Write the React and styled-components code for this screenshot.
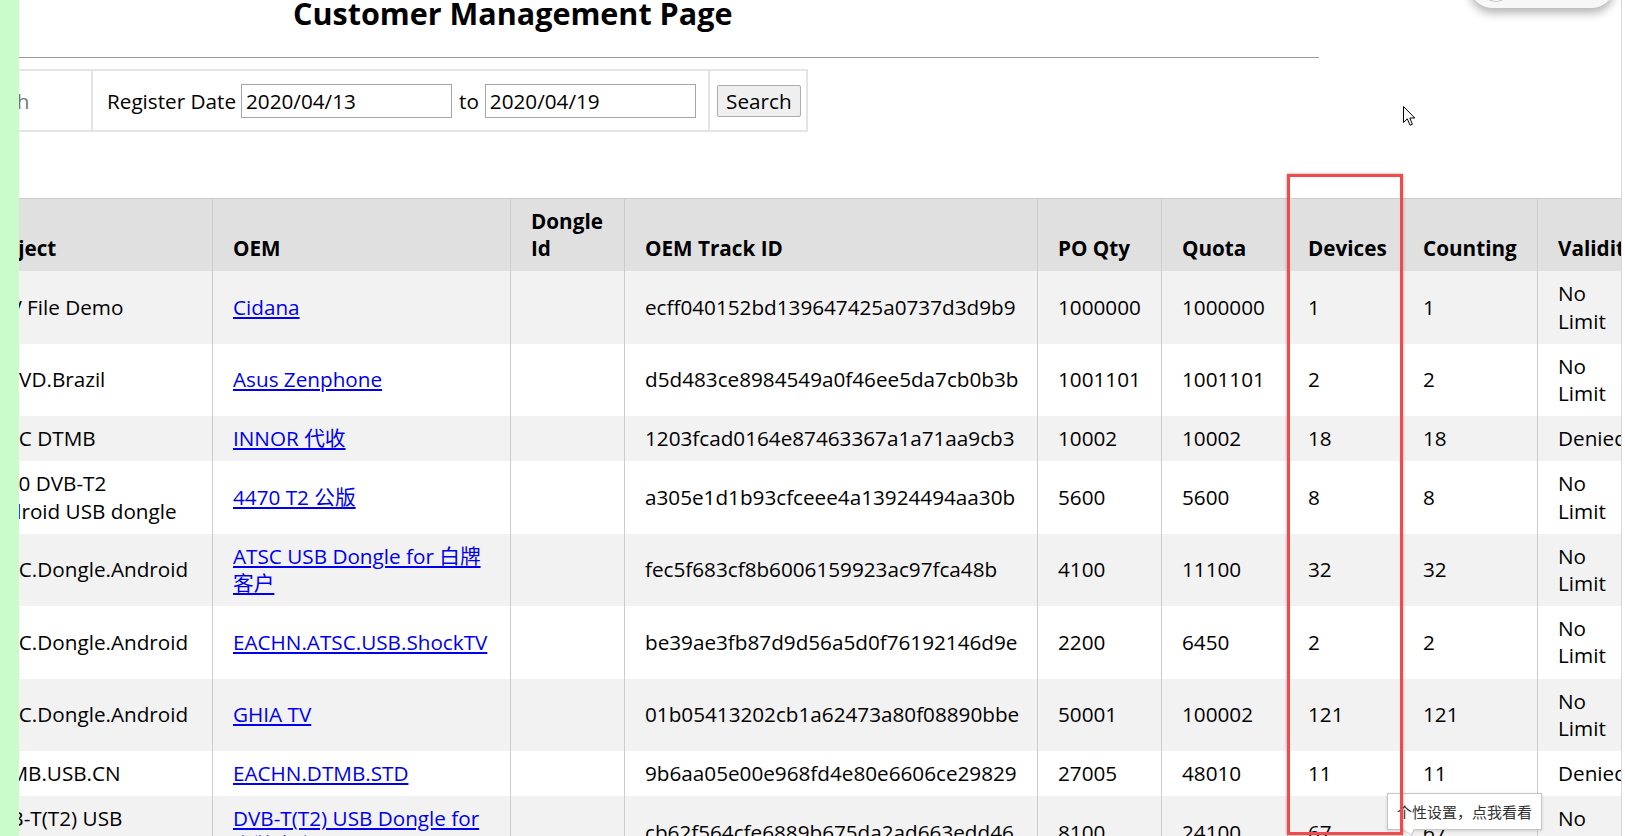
import styled, { createGlobalStyle } from "styled-components";

const GlobalStyle = createGlobalStyle`
  html, body {
    margin: 0;
    padding: 0;
    background: #fff;
  }
  body {
    font-family: "Open Sans", "Noto Sans CJK SC", sans-serif;
    color: #000;
    overflow: hidden;
  }
`;

const Viewport = styled.div`
  position: relative;
  width: 100vw;
  height: 100vh;
  overflow: hidden;
`;

// the page is scrolled a little to the right and down
const Page = styled.div`
  margin: -8px 0 0 -49px;
  width: max-content;
`;

const Title = styled.h1`
  margin: 0;
  padding-left: 342px;
  font-size: 30.5px;
  line-height: 42px;
  font-weight: 700;
`;

const Rule = styled.hr`
  width: 1368px;
  height: 0;
  margin: 23px 0 0;
  border: 0;
  border-top: 1px solid #9b9b9b;
`;

const SearchBar = styled.div`
  display: flex;
  width: max-content;
  height: 63px;
  box-sizing: border-box;
  margin-top: 11px;
  border: 2px solid #e4e4e4;
`;

const SearchCell = styled.div`
  display: flex;
  align-items: center;
  padding: 0 ${(p) => p.$right}px 0 ${(p) => p.$left}px;
  font-size: 20.7px;

  & + & {
    border-left: 2px solid #e4e4e4;
  }
`;

const Label = styled.span`
  margin-right: ${(p) => p.$gap}px;
`;

const Keyword = styled.input`
  width: 112px;
  height: 34px;
  box-sizing: border-box;
  padding: 0 2px;
  border: 0;
  outline: none;
  font: inherit;
  font-size: 20.7px;
  background: transparent;

  &::placeholder {
    color: #757575;
  }
`;

const DateInput = styled.input`
  width: 211px;
  height: 34px;
  box-sizing: border-box;
  margin-right: ${(p) => p.$gap || 0}px;
  padding: 0 4px;
  border: 1px solid #a5a5a5;
  font-family: "Open Sans", sans-serif;
  font-size: 20.7px;
  color: #000;
  background: #fff;
`;

const SearchButton = styled.button`
  width: 84px;
  height: 32px;
  padding: 0;
  border: 1px solid #adadad;
  border-radius: 2px;
  background: #efefef;
  font-family: "Open Sans", sans-serif;
  font-size: 20.7px;
  color: #000;
`;

const Grid = styled.table`
  margin: 66px 0 0 11px;
  width: 1690px;
  border-collapse: collapse;
  table-layout: fixed;
  border-top: 1px solid #ccc;
  font-size: 20.7px;
  line-height: 27.2px;
`;

const Col = styled.col`
  width: ${(p) => p.$w}px;
`;

const Head = styled.th`
  padding: 9px 20px;
  border-left: 1px solid #ccc;
  background: #e0e0e0;
  text-align: left;
  vertical-align: bottom;
  font-weight: 700;

  &:first-child {
    padding-right: 32px;
  }
`;

const Row = styled.tr`
  &:nth-child(odd) {
    background: #f2f2f2;
  }
`;

const Cell = styled.td`
  padding: 9px 20px;
  border-left: 1px solid #ccc;
  vertical-align: middle;

  &:first-child {
    padding-right: 32px;
  }
`;

const OemLink = styled.a`
  color: #0000ee;
  text-decoration: underline;
`;

const GreenStrip = styled.div`
  position: absolute;
  left: 0;
  top: 0;
  width: 19px;
  height: 100%;
  background: #c9fcca;
`;

const RightEdge = styled.div`
  position: absolute;
  right: 0;
  top: 0;
  width: 3px;
  height: 100%;
  background: #fff;
  border-left: 1px solid #d6d6d6;
`;

const FloatBall = styled.div`
  position: absolute;
  left: 1470px;
  top: -36px;
  width: 144px;
  height: 44px;
  border-radius: 22px;
  background: #f7f7f7;
  box-shadow: 0 5px 10px rgba(0, 0, 0, 0.3);

  &::before {
    content: "";
    position: absolute;
    left: 10px;
    top: 6px;
    width: 30px;
    height: 30px;
    border-radius: 50%;
    border: 1px solid #c4c4c4;
    background: #fff;
  }
`;

const RedFrame = styled.div`
  position: absolute;
  left: 1287px;
  top: 174px;
  width: 116px;
  height: 661px;
  box-sizing: border-box;
  border: 3px solid #f24a4a;
  box-shadow: 0 0 3px rgba(0, 0, 0, 0.35);
  z-index: 3;
`;

const Tip = styled.div`
  position: absolute;
  left: 1387px;
  top: 793px;
  width: 155px;
  height: 37px;
  box-sizing: border-box;
  padding-left: 9px;
  display: flex;
  align-items: center;
  border: 1px solid #c6c6c6;
  background: #fff;
  box-shadow: 0 1px 3px rgba(0, 0, 0, 0.15);
  font-family: "Noto Sans CJK SC", sans-serif;
  font-size: 15px;
  color: #333;
  z-index: 2;

  &::after {
    content: "";
    position: absolute;
    left: 16px;
    bottom: -5px;
    width: 8px;
    height: 8px;
    background: #fff;
    border-right: 1px solid #c6c6c6;
    border-bottom: 1px solid #c6c6c6;
    transform: skewX(30deg) rotate(45deg);
  }
`;

const Cursor = styled.svg`
  position: absolute;
  left: 1403px;
  top: 106px;
  z-index: 4;
`;

const columns = [
  { key: "project", label: "Project", w: 250 },
  { key: "oem", label: "OEM", w: 298 },
  { key: "dongle", label: "Dongle Id", w: 114 },
  { key: "track", label: "OEM Track ID", w: 413 },
  { key: "po", label: "PO Qty", w: 124 },
  { key: "quota", label: "Quota", w: 126 },
  { key: "devices", label: "Devices", w: 115 },
  { key: "counting", label: "Counting", w: 135 },
  { key: "validity", label: "Validity", w: 115 },
];

const rows = [
  { project: "DTV File Demo", oem: "Cidana", track: "ecff040152bd139647425a0737d3d9b9", po: "1000000", quota: "1000000", devices: "1", counting: "1", validity: "No Limit" },
  { project: "SBTVD.Brazil", oem: "Asus Zenphone", track: "d5d483ce8984549a0f46ee5da7cb0b3b", po: "1001101", quota: "1001101", devices: "2", counting: "2", validity: "No Limit" },
  { project: "ATSC DTMB", oem: "INNOR 代收", track: "1203fcad0164e87463367a1a71aa9cb3", po: "10002", quota: "10002", devices: "18", counting: "18", validity: "Denied" },
  { project: "4470 DVB-T2 Android USB dongle", oem: "4470 T2 公版", track: "a305e1d1b93cfceee4a13924494aa30b", po: "5600", quota: "5600", devices: "8", counting: "8", validity: "No Limit" },
  { project: "ATSC.Dongle.Android", oem: "ATSC USB Dongle for 白牌客户", track: "fec5f683cf8b6006159923ac97fca48b", po: "4100", quota: "11100", devices: "32", counting: "32", validity: "No Limit" },
  { project: "ATSC.Dongle.Android", oem: "EACHN.ATSC.USB.ShockTV", track: "be39ae3fb87d9d56a5d0f76192146d9e", po: "2200", quota: "6450", devices: "2", counting: "2", validity: "No Limit" },
  { project: "ATSC.Dongle.Android", oem: "GHIA TV", track: "01b05413202cb1a62473a80f08890bbe", po: "50001", quota: "100002", devices: "121", counting: "121", validity: "No Limit" },
  { project: "DTMB.USB.CN", oem: "EACHN.DTMB.STD", track: "9b6aa05e00e968fd4e80e6606ce29829", po: "27005", quota: "48010", devices: "11", counting: "11", validity: "Denied" },
  { project: "DVB-T(T2) USB Dongle", oem: "DVB-T(T2) USB Dongle for 白牌客户", track: "cb62f564cfe6889b675da2ad663edd46", po: "8100", quota: "24100", devices: "67", counting: "67", validity: "No Limit" },
];

export default function App() {
  return (
    <Viewport>
      <GlobalStyle />
      <Page>
        <Title>Customer Management Page</Title>
        <Rule />

        <SearchBar>
          <SearchCell $left={9} $right={17}>
            <Keyword placeholder="Search" />
          </SearchCell>
          <SearchCell $left={14} $right={12}>
            <Label $gap={5}>Register Date</Label>
            <DateInput defaultValue="2020/04/13" $gap={7} />
            <Label $gap={6}>to</Label>
            <DateInput defaultValue="2020/04/19" />
          </SearchCell>
          <SearchCell $left={7} $right={5}>
            <SearchButton>Search</SearchButton>
          </SearchCell>
        </SearchBar>

        <Grid>
          <colgroup>
            {columns.map((c) => (
              <Col key={c.key} $w={c.w} />
            ))}
          </colgroup>
          <thead>
            <tr>
              {columns.map((c) => (
                <Head key={c.key}>{c.label}</Head>
              ))}
            </tr>
          </thead>
          <tbody>
            {rows.map((r, i) => (
              <Row key={i}>
                {columns.map((c) => (
                  <Cell key={c.key}>
                    {c.key === "oem" ? <OemLink href="#">{r.oem}</OemLink> : r[c.key] || ""}
                  </Cell>
                ))}
              </Row>
            ))}
          </tbody>
        </Grid>
      </Page>

      <GreenStrip />
      <RightEdge />
      <FloatBall />
      <RedFrame />
      <Tip>个性设置，点我看看</Tip>
      <Cursor width="13" height="21" viewBox="0 0 13 21">
        <path
          d="M0.5 0.5 L0.5 16.5 L4.3 12.8 L7 19.2 L9.4 18.2 L6.8 12 L11.8 12 Z"
          fill="#fff"
          stroke="#000"
          strokeWidth="1"
          strokeLinejoin="round"
        />
      </Cursor>
    </Viewport>
  );
}
